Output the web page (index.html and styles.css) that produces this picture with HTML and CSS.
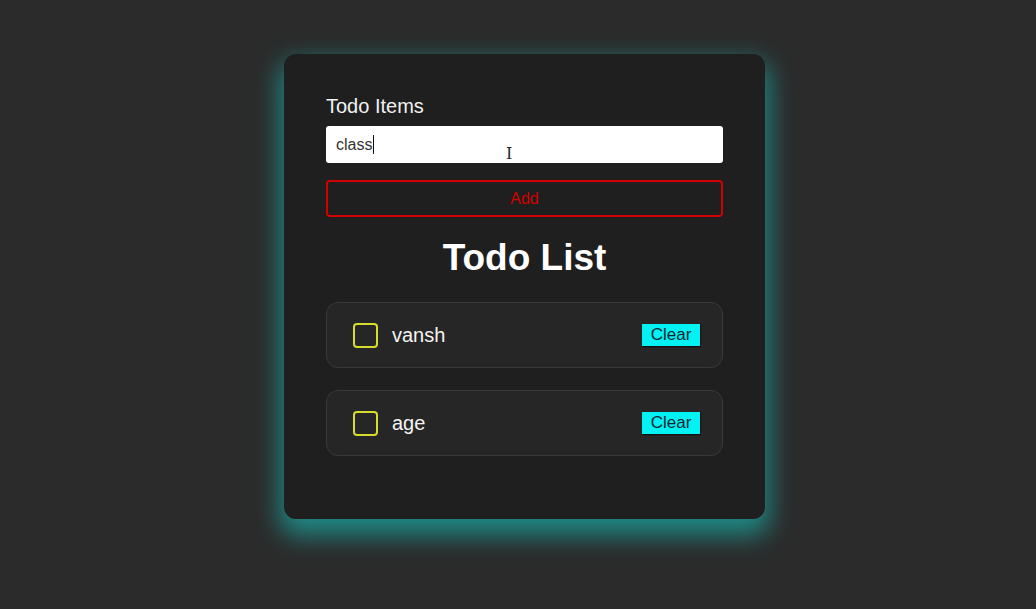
FILE: index.html
```html
<!DOCTYPE html>
<html>
<head>
<meta charset="utf-8">
<link rel="stylesheet" href="styles.css">
</head>
<body>
<div class="card">
  <label class="label">Todo Items</label>
  <div class="input"><span class="value">class</span><span class="caret"></span><span class="ibeam">I</span></div>
  <button class="add">Add</button>
  <h1 class="title">Todo List</h1>
  <ul class="list">
    <li class="item"><span class="check"></span><span class="text">vansh</span><button class="clear">Clear</button></li>
    <li class="item"><span class="check"></span><span class="text">age</span><button class="clear">Clear</button></li>
  </ul>
</div>
</body>
</html>
```
FILE: styles.css
```css
html, body {
  margin: 0;
  padding: 0;
  background: #2b2b2b;
  font-family: "Liberation Sans", Arial, sans-serif;
}
body {
  height: 609px;
  overflow: hidden;
}
.card {
  box-sizing: border-box;
  width: 481px;
  height: 465px;
  margin: 54px 0 0 284px;
  padding: 41px 42px 0 42px;
  background: #1f1f1f;
  border-radius: 12px;
  box-shadow: 0 12px 26px 4px #1f8a86;
  display: flex;
  flex-direction: column;
}
.label {
  color: #f2f2f2;
  font-size: 20px;
  line-height: 23px;
}
.input {
  position: relative;
  margin-top: 8px;
  height: 37px;
  background: #fff;
  border-radius: 3px;
  display: flex;
  align-items: center;
  padding-left: 10px;
}
.value {
  color: #333;
  font-size: 16px;
}
.caret {
  width: 1px;
  height: 19px;
  background: #111;
  margin-left: 1px;
}
.ibeam {
  position: absolute;
  left: 180px;
  top: 20px;
  font-family: "DejaVu Serif", serif;
  font-size: 16px;
  line-height: 16px;
  color: #222;
}
.add {
  margin-top: 17px;
  height: 37px;
  background: transparent;
  border: 2px solid #d40000;
  border-radius: 4px;
  color: #d40000;
  font-family: "Liberation Sans", Arial, sans-serif;
  font-size: 16px;
  padding: 0;
}
.title {
  margin: 20px 0 0 0;
  text-align: center;
  color: #fff;
  font-size: 37px;
  line-height: 41px;
  font-weight: bold;
}
.list {
  list-style: none;
  margin: 24px 0 0 0;
  padding: 0;
  display: flex;
  flex-direction: column;
  gap: 22px;
}
.item {
  box-sizing: border-box;
  height: 66px;
  background: #262626;
  border: 1px solid #393939;
  border-radius: 12px;
  display: flex;
  align-items: center;
  padding: 0 22px 0 26px;
}
.check {
  box-sizing: border-box;
  width: 25px;
  height: 25px;
  border: 2px solid #d6dc2a;
  border-radius: 4px;
}
.text {
  flex: 1;
  margin-left: 14px;
  color: #f4f4f4;
  font-size: 20px;
}
.clear {
  height: 22px;
  width: 58px;
  padding: 0;
  border: none;
  background: #00f2f2;
  color: #123;
  font-family: "Liberation Sans", Arial, sans-serif;
  font-size: 17px;
  line-height: 22px;
  box-shadow: 1px 1px 1px #111;
}
```
